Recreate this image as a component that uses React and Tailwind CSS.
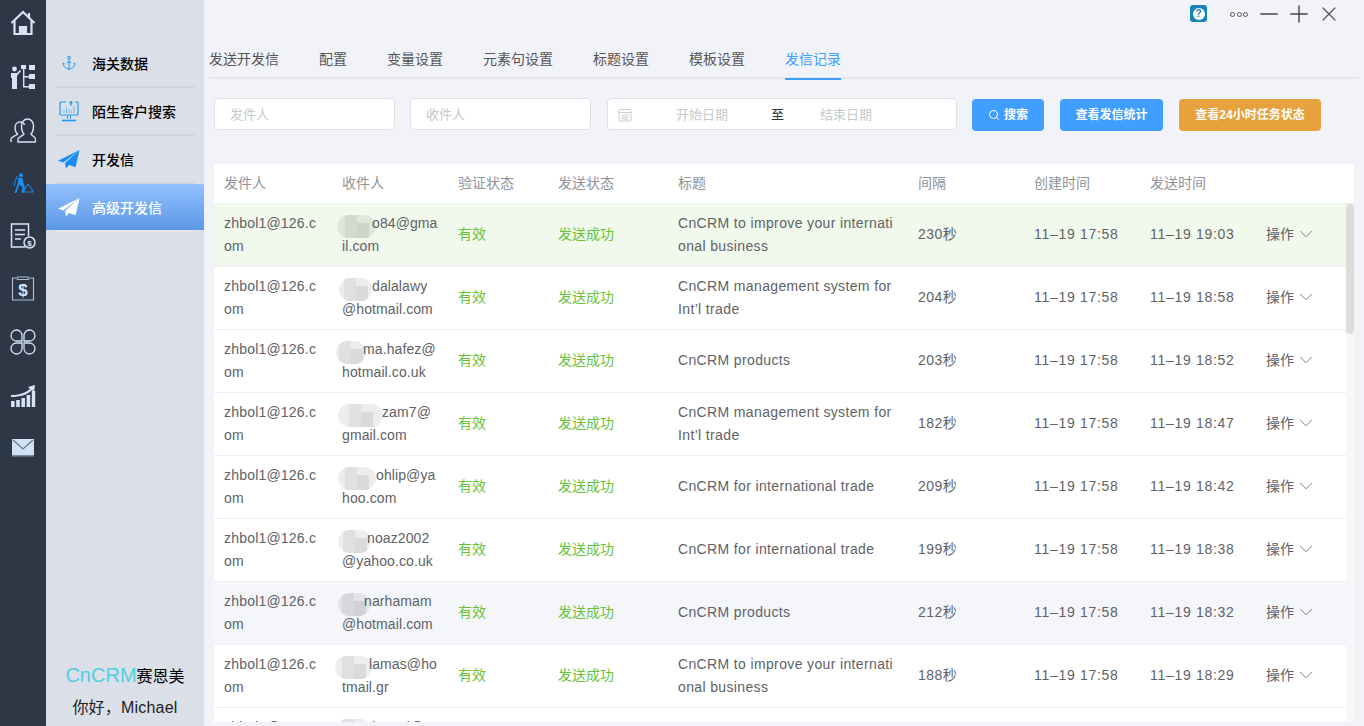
import { Anchor, Search, ChevronDown, X, Minus, Plus } from 'lucide-react';

const tabs = ['发送开发信', '配置', '变量设置', '元素句设置', '标题设置', '模板设置', '发信记录'];

const T1 = 'CnCRM to improve your internati\nonal business';
const T2 = 'CnCRM management system for\nInt’l trade';
const T3 = 'CnCRM products';
const T4 = 'CnCRM for international trade';

const rows = [
  { a: 'o84@gma', pad: 'pl-[30px]', b: 'il.com', title: T1, gap: '230秒', sent: '11–19 19:03', blob: 'left-[-5px] w-[39px]', bg: 'bg-[#f0f9eb]' },
  { a: 'dalalawy', pad: 'pl-[30px]', b: '@hotmail.com', title: T2, gap: '204秒', sent: '11–19 18:58', blob: 'left-[-3px] w-[33px]', bg: 'bg-white' },
  { a: 'ma.hafez@', pad: 'pl-[21px]', b: 'hotmail.co.uk', title: T3, gap: '203秒', sent: '11–19 18:52', blob: 'left-[-6px] w-[30px]', bg: 'bg-white' },
  { a: 'zam7@', pad: 'pl-[40px]', b: 'gmail.com', title: T2, gap: '182秒', sent: '11–19 18:47', blob: 'left-[-4px] w-[45px]', bg: 'bg-white' },
  { a: 'ohlip@ya', pad: 'pl-[34px]', b: 'hoo.com', title: T4, gap: '209秒', sent: '11–19 18:42', blob: 'left-[-4px] w-[38px]', bg: 'bg-white' },
  { a: 'noaz2002', pad: 'pl-[25px]', b: '@yahoo.co.uk', title: T4, gap: '199秒', sent: '11–19 18:38', blob: 'left-[-4px] w-[33px]', bg: 'bg-white' },
  { a: 'narhamam', pad: 'pl-[22px]', b: '@hotmail.com', title: T3, gap: '212秒', sent: '11–19 18:32', blob: 'left-[-4px] w-[32px]', bg: 'bg-[#f4f6fa]' },
  { a: 'lamas@ho', pad: 'pl-[27px]', b: 'tmail.gr', title: T1, gap: '188秒', sent: '11–19 18:29', blob: 'left-[-7px] w-[37px]', bg: 'bg-white' },
  { a: 'kamal@ya', pad: 'pl-[30px]', b: 'hoo.com', title: T3, gap: '201秒', sent: '11–19 18:25', blob: 'left-[-7px] w-[37px]', bg: 'bg-white' },
];

const HomeIcon = () => (
  <svg width="26" height="26" viewBox="0 0 26 26" fill="none" stroke="#d7e3f5" strokeWidth="2.2">
    <path d="M1.5 13 13 2l11.5 11" />
    <path d="M4.5 11v13h17V11" />
    <path d="M10 24v-7h6v7" fill="#d7e3f5" />
    <path d="M19 3v5" />
  </svg>
);

const OrgIcon = () => (
  <svg width="26" height="26" viewBox="0 0 26 26" fill="#d7e3f5">
    <circle cx="4.5" cy="5" r="2.4" />
    <path d="M1 9h6l3-3 1 1-4 5v13H2V14H1z" />
    <rect x="11" y="1" width="5" height="4" />
    <rect x="19" y="1" width="6" height="5" />
    <rect x="19" y="10" width="6" height="5" />
    <rect x="19" y="20" width="6" height="5" />
    <path d="M13 5h1.4v17H19v1.4h-6zM14 12h5v1.4h-5z" />
  </svg>
);

const UsersIcon = () => (
  <svg width="26" height="26" viewBox="0 0 26 26" fill="none" stroke="#d7e3f5" strokeWidth="1.4">
    <path d="M1 25v-3c0-2 5-3 6.5-5-2-2-2.500-4-2.500-6 0-4 2.500-6 5-6 2 0 4 1 4.500 3" />
    <path d="M8 25v-3c0-2 5-3 6-5-2-2-2.500-5-2.500-8 0-4 2.500-7 6-7s6 3 6 7c0 3-.5 6-2.500 8 1 2 4.500 3 4.500 5v3z" />
  </svg>
);

const DiggerIcon = () => (
  <svg width="22" height="20" viewBox="0 0 22 20" fill="#1c8fe8">
    <circle cx="9" cy="2.200" r="2" />
    <path d="M6 5h4.500l1 5.500 1.500 3.500-1.500 6-2-.5 1-5-3-3-3 8.500H2.500L6 10z" />
    <path d="M5 3 2 13" stroke="#1c8fe8" strokeWidth="1" />
    <path d="m11.500 19 4.500-8 5.500 8z" fill="none" stroke="#1c8fe8" strokeWidth="1" />
  </svg>
);

const DocIcon = () => (
  <svg width="26" height="26" viewBox="0 0 26 26" fill="none" stroke="#d7e3f5" strokeWidth="1.5">
    <path d="M15 24H1.500V1h17v12" />
    <path d="M5 7h10M5 11.500h10M5 16h6" />
    <circle cx="19.500" cy="19.500" r="5.500" />
    <text x="19.500" y="22.500" fontSize="8" textAnchor="middle" fill="#d7e3f5" stroke="none" fontWeight="700">$</text>
  </svg>
);

const BillIcon = () => (
  <svg width="24" height="26" viewBox="0 0 24 26" fill="none" stroke="#aebcd2" strokeWidth="1.2">
    <path d="M5 2H1.500v22h21V2H19" />
    <rect x="6" y="1" width="12" height="2.500" rx="1" />
    <text x="12" y="20" fontSize="17" textAnchor="middle" fill="#d7e3f5" stroke="none" fontWeight="700">$</text>
  </svg>
);

const PetalIcon = () => (
  <svg width="26" height="26" viewBox="0 0 26 26" fill="none" stroke="#d7e3f5" strokeWidth="1.3">
    <path d="M12 12H7a5.500 5.500 0 1 1 5-5z" />
    <path d="M14 12h5a5.500 5.500 0 1 0-5-5z" />
    <path d="M12 14H7a5.500 5.500 0 1 0 5 5z" />
    <path d="M14 14h5a5.500 5.500 0 1 1-5 5z" />
  </svg>
);

const GrowthIcon = () => (
  <svg width="26" height="26" viewBox="0 0 26 26" fill="#d7e3f5">
    <rect x="1" y="19" width="3.600" height="6" />
    <rect x="6.200" y="18" width="3.600" height="7" />
    <rect x="11.400" y="16" width="3.600" height="9" />
    <rect x="16.600" y="13" width="3.600" height="12" />
    <rect x="21.800" y="9" width="3.400" height="16" />
    <path d="M1 13c8 0 14-2 19-6l-2-2 7-2-1 7-2-2c-5 5-12 7-21 7z" />
  </svg>
);

const MailIcon = () => (
  <svg width="22" height="18" viewBox="0 0 22 18">
    <rect x="0" y="0" width="22" height="16" fill="#d0e0f5" />
    <path d="m1 1 10 9 10-9" fill="none" stroke="#6c7686" strokeWidth="1.200" />
    <rect x="0" y="16" width="22" height="1.600" fill="#7d8796" />
  </svg>
);

const MonitorIcon = () => (
  <svg width="20" height="21" viewBox="0 0 20 21" fill="none" stroke="#1e9bf0" strokeWidth="1.200">
    <path d="M7 1H2a1 1 0 0 0-1 1v11a1 1 0 0 0 1 1h16a1 1 0 0 0 1-1V2a1 1 0 0 0-1-1h-2" />
    <path d="M5 12V9M7.500 12V6M10 12V8M12.500 12V9.500M15 12V5" stroke="#7dbdf0" />
    <path d="M12 5V.5M10.500 2 12 .5 13.500 2" />
    <path d="M8.500 14.500v3M11.500 14.500v3" />
    <path d="M3 19.500h14" strokeWidth="1.600" />
  </svg>
);

const PlaneIcon = ({ color }) => (
  <svg width="22" height="19" viewBox="0 0 22 19" fill={color}>
    <path d="M21.500 0 0 10.800l5.500 1.700z" />
    <path d="M21.500 0 7 13l1 5.500 3-3.500 6.500 2.200z" />
  </svg>
);

const CalendarIcon = () => (
  <svg width="14" height="14" viewBox="0 0 14 14" fill="none" stroke="#c8ccd4" strokeWidth="1">
    <rect x="1" y="1.500" width="12" height="11.500" rx="1" />
    <path d="M1 4.500h12M3.500 7h7M3.500 9h7M3.500 11h7" />
  </svg>
);

const HelpIcon = () => (
  <span className="flex h-[17px] w-[17px] items-center justify-center rounded-[3px] bg-[#1583b8]">
    <span className="flex h-[12px] w-[12px] items-center justify-center rounded-full bg-white text-[10px] font-bold leading-none text-[#1583b8]">?</span>
  </span>
);

const railIcons = [HomeIcon, OrgIcon, UsersIcon, DiggerIcon, DocIcon, BillIcon, PetalIcon, GrowthIcon, MailIcon];

const Blob = ({ className }) => (
  <div className={`absolute top-[3px] flex h-[23px] justify-center overflow-hidden rounded-full bg-black/[0.07] ${className}`}>
    <div className="h-full w-[12px] bg-black/[0.05]" />
    <div className="mt-[8px] h-full w-[12px] bg-black/[0.08]" />
  </div>
);

const App = () => {
  return (
    <div className="flex h-[726px] w-[1364px] overflow-hidden bg-[#f2f3f8] font-['Liberation_Sans','Noto_Sans_CJK_SC',sans-serif] text-sm text-[#606266]">
      {/* Icon rail */}
      <div className="flex w-[46px] shrink-0 flex-col items-center bg-[#2e3746]">
        {railIcons.map((Icon, i) => (
          <div key={i} className="flex h-[53px] w-full shrink-0 items-center justify-center first:h-[46px] [&:nth-child(2)]:mt-[4px]">
            <Icon />
          </div>
        ))}
      </div>

      {/* Module menu */}
      <div className="flex w-[158px] shrink-0 flex-col bg-[#dbdfe8] pt-[40px]">
        <MenuItem icon={<Anchor size={16} color="#2b9cf2" strokeWidth={1.5} />} label="海关数据" />
        <MenuItem icon={<MonitorIcon />} label="陌生客户搜索" />
        <MenuItem icon={<PlaneIcon color="#1a8cf5" />} label="开发信" />
        <MenuItem icon={<PlaneIcon color="#ffffff" />} label="高级开发信" active />
        <div className="mt-auto flex flex-col items-center pb-[8px]">
          <div className="flex items-baseline text-black">
            <span className="text-xl text-[#4fd0e0]">CnCRM</span>
            <span className="text-base">赛恩美</span>
          </div>
          <div className="mt-[9px] text-base leading-[20px] tracking-[0.2px] text-[#222]">你好，Michael</div>
        </div>
      </div>

      {/* Main */}
      <div className="flex min-w-0 flex-1 flex-col">
        <div className="flex h-[28px] items-center justify-end">
          <span className="-mt-[1px]"><HelpIcon /></span>
          <div className="ml-[23px] flex gap-[1.5px]">
            <span className="h-[5px] w-[5px] rounded-full border border-[#555]" />
            <span className="h-[5px] w-[5px] rounded-full border border-[#555]" />
            <span className="h-[5px] w-[5px] rounded-full border border-[#555]" />
          </div>
          <Minus className="ml-[7px]" size={28} color="#444" strokeWidth={1.2} />
          <Plus className="ml-[2px]" size={28} color="#444" strokeWidth={1.2} />
          <X className="ml-[4px] mr-[23px]" size={24} color="#555" strokeWidth={1.2} />
        </div>

        <div className="ml-[5px] mr-[5px] mt-[15px] flex h-[36px] gap-[40px] border-b-2 border-[#e4e7ed]">
          {tabs.map((tab) => {
            const active = tab === '发信记录';
            return (
              <div
                key={tab}
                className={`-mb-[2px] flex h-[37px] items-center border-b-2 pb-[3px] ${active ? 'border-[#409eff] text-[#409eff]' : 'border-transparent text-[#555]'}`}
              >
                {tab}
              </div>
            );
          })}
        </div>

        {/* Filters */}
        <div className="ml-[10px] mt-[19px] flex h-[33px] text-[13px] text-[#c5c8ce]">
          <div className="flex h-[32px] w-[181px] items-center rounded border border-[#dfe1e8] bg-white pl-[15px] pt-[2px]">发件人</div>
          <div className="ml-[15px] flex h-[32px] w-[181px] items-center rounded border border-[#dfe1e8] bg-white pl-[15px] pt-[2px]">收件人</div>
          <div className="ml-[16px] flex h-[32px] w-[350px] items-center rounded border border-[#dfe1e8] bg-white pl-[10px] pt-[2px]">
            <CalendarIcon />
            <span className="ml-[44px]">开始日期</span>
            <span className="ml-[43px] text-[#333]">至</span>
            <span className="ml-[36px]">结束日期</span>
          </div>
          <button className="ml-[15px] mt-[1px] flex h-[32px] w-[72px] items-center justify-center gap-[4px] rounded bg-[#409eff] text-xs font-bold text-white">
            <Search size={12} strokeWidth={2} />
            搜索
          </button>
          <button className="ml-[16px] mt-[1px] h-[32px] w-[103px] rounded bg-[#409eff] text-xs font-bold text-white">查看发信统计</button>
          <button className="ml-[16px] mt-[1px] h-[32px] w-[142px] rounded bg-[#e6a23c] text-xs font-bold text-white">查看24小时任务状态</button>
        </div>

        {/* Records */}
        <div className="relative ml-[10px] mt-[33px] h-[558px] w-[1140px] overflow-hidden bg-white">
          <table className="w-full table-fixed border-collapse">
            <colgroup>
              <col className="w-[118px]" />
              <col className="w-[116px]" />
              <col className="w-[100px]" />
              <col className="w-[120px]" />
              <col className="w-[240px]" />
              <col className="w-[116px]" />
              <col className="w-[116px]" />
              <col className="w-[116px]" />
              <col />
            </colgroup>
            <thead>
              <tr className="h-[39px] border-b border-[#ebeef5] text-left text-[#909399]">
                {['发件人', '收件人', '验证状态', '发送状态', '标题', '间隔', '创建时间', '发送时间', ''].map((h, i) => (
                  <th key={i} className="px-[10px] font-normal">{h}</th>
                ))}
              </tr>
            </thead>
            <tbody>
              {rows.map((row, i) => (
                <tr key={i} className={`h-[63px] border-b border-[#ebeef5] ${row.bg}`}>
                  <td className="break-all px-[10px] leading-[23px] tracking-[0.2px]">zhbol1@126.com</td>
                  <td className="px-[10px] leading-[23px] tracking-[0.1px]">
                    <div className="relative">
                      <Blob className={row.blob} />
                      <div className={`whitespace-nowrap ${row.pad}`}>{row.a}</div>
                      <div className="whitespace-nowrap">{row.b}</div>
                    </div>
                  </td>
                  <td className="px-[10px] pb-[2px] text-[#67c23a]">有效</td>
                  <td className="px-[10px] pb-[2px] text-[#67c23a]">发送成功</td>
                  <td className="whitespace-pre px-[10px] leading-[23px] tracking-[0.36px]">{row.title}</td>
                  <td className="px-[10px] pb-[2px] tracking-[0.5px]">{row.gap}</td>
                  <td className="whitespace-nowrap px-[10px] pb-[2px] tracking-[0.7px]">11–19 17:58</td>
                  <td className="whitespace-nowrap px-[10px] pb-[2px] tracking-[0.7px]">{row.sent}</td>
                  <td className="px-[10px] pb-[2px]">
                    <span className="flex items-center">
                      操作
                      <ChevronDown className="ml-[1px]" size={22} color="#666" strokeWidth={0.9} />
                    </span>
                  </td>
                </tr>
              ))}
            </tbody>
          </table>
          <div className="absolute right-0 top-[40px] h-[518px] w-[8px] bg-[#f7f7f7]">
            <div className="h-[130px] w-full rounded-[4px] bg-[#dcdcdc]" />
          </div>
        </div>
      </div>
    </div>
  );
};

const MenuItem = ({ icon, label, active }) => (
  <div className={`mx-[10px] h-[48px] shrink-0 border-b-2 ${active ? 'border-[#e4e7ee]' : 'border-[#cfd3dc]'}`}>
    <div className={`-mx-[10px] flex h-[46px] items-center ${active ? 'bg-gradient-to-b from-[#92c1ff] to-[#5b97e6] font-bold text-white' : 'text-black'}`}>
      <span className="flex w-[46px] shrink-0 justify-center">{icon}</span>
      <span className="pt-[2px] font-medium">{label}</span>
    </div>
  </div>
);

export default App;
